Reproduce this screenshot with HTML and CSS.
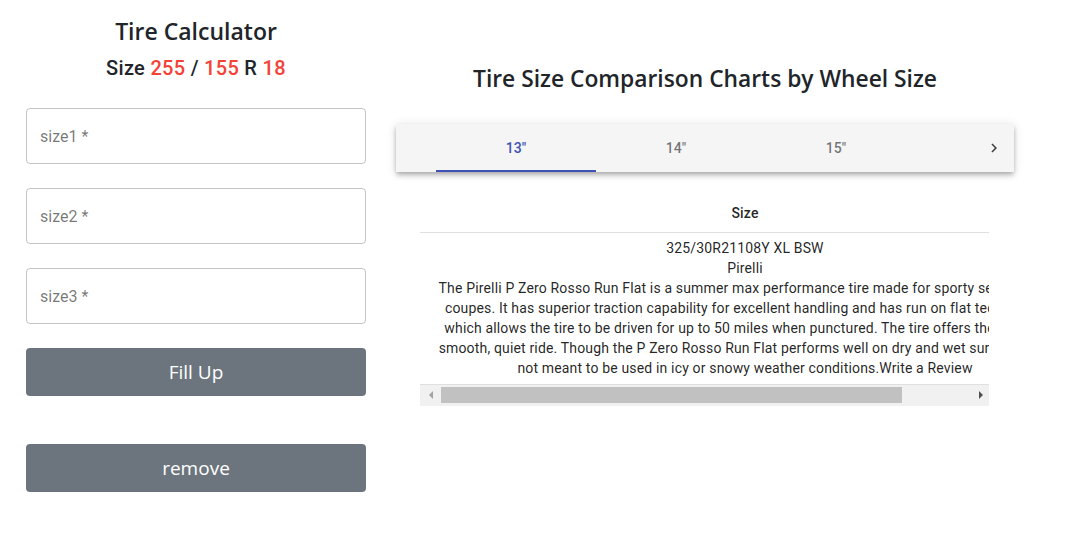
FILE: index.html
```html
<!DOCTYPE html>
<html lang="en">
<head>
<meta charset="utf-8">
<title>Tire Calculator</title>
<link rel="stylesheet" href="styles.css">
</head>
<body>
<div class="page">
  <aside class="calc">
    <h2 class="calc-title">Tire Calculator</h2>
    <h5 class="calc-size">Size <span class="red">255</span> / <span class="red">155</span> R <span class="red">18</span></h5>
    <div class="field"><span class="placeholder">size1 *</span></div>
    <div class="field"><span class="placeholder">size2 *</span></div>
    <div class="field"><span class="placeholder">size3 *</span></div>
    <button class="btn btn-fill">Fill Up</button>
    <button class="btn btn-remove">remove</button>
  </aside>
  <main class="charts">
    <h2 class="charts-title">Tire Size Comparison Charts by Wheel Size</h2>
    <div class="tabbar">
      <div class="tabs">
        <div class="tab active">13"</div>
        <div class="tab">14"</div>
        <div class="tab">15"</div>
      </div>
      <div class="tab-scroll">
        <svg width="18" height="18" viewBox="0 0 24 24"><path d="M10 6 8.59 7.41 13.17 12l-4.58 4.59L10 18l6-6z" fill="rgba(0,0,0,0.75)"/></svg>
      </div>
    </div>
    <div class="table-box">
      <div class="table-wrap">
        <table class="table">
          <thead><tr><th>Size</th></tr></thead>
          <tbody>
            <tr><td>325/30R21108Y XL BSW<br>Pirelli<br>The Pirelli P Zero Rosso Run Flat is a summer max performance tire made for sporty sedans and<br>coupes. It has superior traction capability for excellent handling and has run on flat technology<br>which allows the tire to be driven for up to 50 miles when punctured. The tire offers the driver a<br>smooth, quiet ride. Though the P Zero Rosso Run Flat performs well on dry and wet surfaces it is<br>not meant to be used in icy or snowy weather conditions.Write a Review</td></tr>
          </tbody>
        </table>
      </div>
      <div class="hscroll">
        <div class="hs-btn"><span class="tri tri-left"></span></div>
        <div class="hs-track"><div class="hs-thumb"></div></div>
        <div class="hs-btn"><span class="tri tri-right"></span></div>
      </div>
    </div>
  </main>
</div>
</body>
</html>
```
FILE: styles.css
```css
* { box-sizing: border-box; }
html, body { margin: 0; padding: 0; background: #fff; }
body {
  font-family: "Open Sans", "Noto Sans", "Liberation Sans", sans-serif;
  color: #212529;
}
.page {
  display: flex;
  align-items: flex-start;
  gap: 30px;
  padding-left: 26px;
}
.calc {
  width: 340px;
  display: flex;
  flex-direction: column;
}
.calc-title {
  margin: 14px 0 0;
  font-size: 23px;
  font-weight: 600;
  line-height: 34px;
  text-align: center;
}
.calc-size {
  margin: 6px 0 0;
  font-family: Roboto, "Liberation Sans", sans-serif;
  font-size: 20px;
  font-weight: 500;
  letter-spacing: 0.3px;
  line-height: 28px;
  text-align: center;
}
.red { color: #f44336; }
.field {
  height: 56px;
  border: 1px solid #c4c4c4;
  border-radius: 4px;
  margin-top: 24px;
  display: flex;
  align-items: center;
  padding: 0 13px;
}
.calc-size + .field { margin-top: 26px; }
.placeholder {
  font-family: Roboto, "Liberation Sans", sans-serif;
  font-size: 16px;
  color: rgba(0,0,0,0.54);
}
.btn {
  height: 48px;
  border: 0;
  border-radius: 4px;
  background: #6c757d;
  color: #fff;
  font-family: "Open Sans", "Noto Sans", sans-serif;
  font-size: 19px;
  font-weight: 500;
  padding: 0;
}
.btn-fill { margin-top: 24px; }
.btn-remove { margin-top: 48px; }

.charts {
  width: 618px;
  display: flex;
  flex-direction: column;
}
.charts-title {
  margin: 62px 0 0;
  font-size: 22.8px;
  font-weight: 600;
  line-height: 34px;
  text-align: center;
}
.tabbar {
  margin-top: 28px;
  height: 48px;
  background: #f5f5f5;
  box-shadow: 0 2px 4px -1px rgba(0,0,0,0.2), 0 4px 5px 0 rgba(0,0,0,0.14), 0 1px 10px 0 rgba(0,0,0,0.12);
  display: flex;
  padding-left: 40px;
}
.tabs { display: flex; flex: 1; }
.tab {
  width: 160px;
  height: 48px;
  display: flex;
  align-items: center;
  justify-content: center;
  font-family: Roboto, "Liberation Sans", sans-serif;
  font-size: 14px;
  font-weight: 500;
  color: rgba(0,0,0,0.54);
  border-bottom: 2px solid transparent;
  padding-top: 1px;
}
.tab.active { color: #3f51b5; border-bottom-color: #3f51b5; }
.tab-scroll {
  width: 40px;
  display: flex;
  align-items: center;
  justify-content: center;
}
.table-box {
  margin: 22px 25px 0 24px;
}
.table-wrap {
  overflow: hidden;
}
.table {
  border-collapse: collapse;
  min-width: 650px;
  font-family: Roboto, "Liberation Sans", sans-serif;
  font-size: 14px;
  letter-spacing: 0.16px;
  color: rgba(0,0,0,0.87);
}
.table th {
  font-weight: 500;
  height: 38px;
  padding: 0 16px;
  border-bottom: 1px solid #e0e0e0;
  text-align: center;
}
.table td {
  padding: 5px 16px 6px;
  line-height: 20px;
  text-align: center;
  white-space: nowrap;
  border-bottom: 1px solid #e0e0e0;
}
.hscroll {
  display: flex;
  height: 21px;
  background: #f1f1f1;
}
.hs-btn {
  width: 17px;
  display: flex;
  align-items: center;
  justify-content: center;
}
.hs-track {
  flex: 1;
  padding: 2px 0 3px 4px;
}
.hs-thumb {
  width: 461px;
  height: 100%;
  background: #c1c1c1;
}
.tri {
  width: 0;
  height: 0;
  border-top: 4px solid transparent;
  border-bottom: 4px solid transparent;
}
.tri-left { border-right: 4px solid #a3a3a3; margin-left: 4px; }
.tri-right { border-left: 4px solid #505050; }
```
